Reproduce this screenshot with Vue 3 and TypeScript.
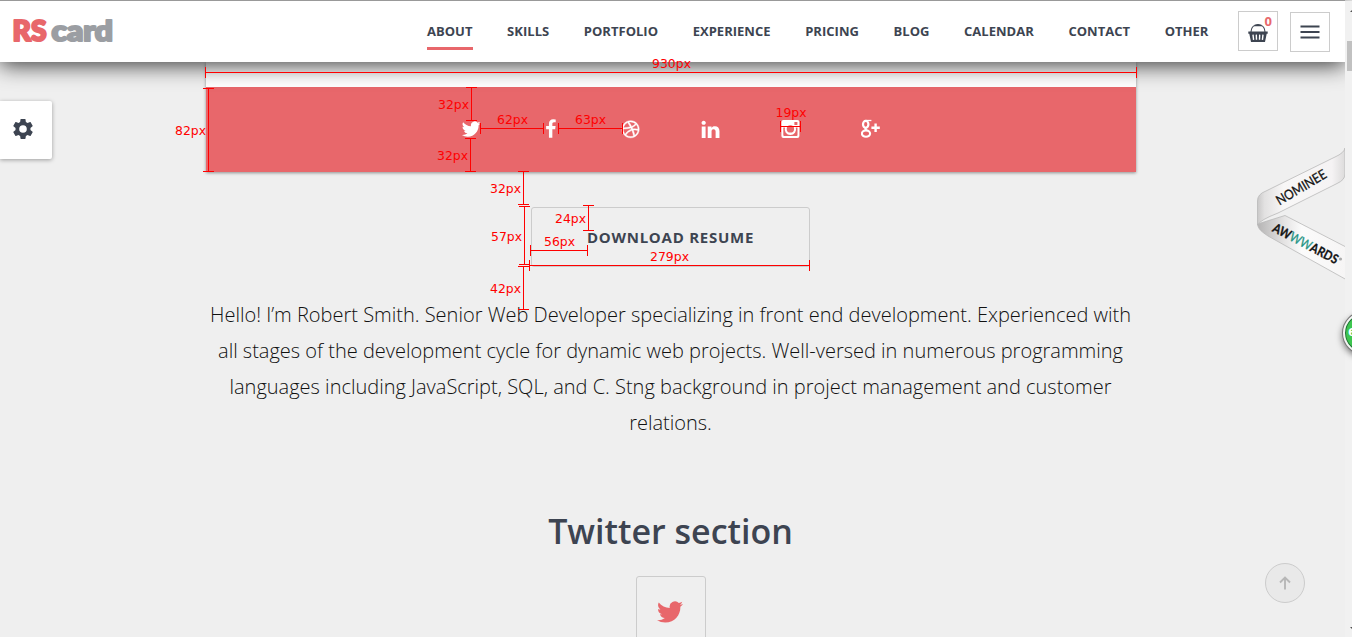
<script setup lang="ts">
interface Mark {
  label: string
  x1: number
  y1: number
  x2: number
  y2: number
  tx: number
  ty: number
  w: number
}

const nav: string[] = ['About', 'Skills', 'Portfolio', 'Experience', 'Pricing', 'Blog', 'Calendar', 'Contact', 'Other']

const marks: Mark[] = [
  { label: '930px', x1: 205, y1: 72, x2: 1136, y2: 72, tx: 652, ty: 68, w: 39 },
  { label: '82px', x1: 208, y1: 88, x2: 208, y2: 171, tx: 175, ty: 135, w: 31 },
  { label: '32px', x1: 471, y1: 87, x2: 471, y2: 120, tx: 438, ty: 109, w: 31 },
  { label: '32px', x1: 470, y1: 138, x2: 470, y2: 171, tx: 437, ty: 160, w: 31 },
  { label: '62px', x1: 480, y1: 128, x2: 543, y2: 128, tx: 497, ty: 124, w: 31 },
  { label: '63px', x1: 558, y1: 128, x2: 622, y2: 128, tx: 575, ty: 124, w: 31 },
  { label: '19px', x1: 780, y1: 126, x2: 800, y2: 126, tx: 775.5, ty: 117, w: 31 },
  { label: '32px', x1: 523, y1: 171, x2: 523, y2: 204, tx: 490, ty: 193, w: 31 },
  { label: '57px', x1: 524, y1: 206, x2: 524, y2: 264, tx: 491, ty: 241, w: 31 },
  { label: '24px', x1: 588, y1: 205, x2: 588, y2: 230, tx: 555, ty: 223, w: 31 },
  { label: '56px', x1: 530, y1: 250, x2: 587, y2: 250, tx: 544, ty: 246, w: 31 },
  { label: '279px', x1: 529, y1: 265, x2: 809, y2: 265, tx: 650, ty: 261, w: 39 },
  { label: '42px', x1: 523, y1: 266, x2: 523, y2: 309, tx: 490, ty: 293, w: 31 },
]

// Dimension line with a 10px tick at each end
function markPath(m: Mark): string {
  const x1 = m.x1 + 0.5
  const y1 = m.y1 + 0.5
  const x2 = m.x2 + 0.5
  const y2 = m.y2 + 0.5
  return m.y1 === m.y2
    ? `M${x1} ${y1}H${x2}M${x1} ${y1 - 5.5}v11M${x2} ${y1 - 5.5}v11`
    : `M${x1} ${y1}V${y2}M${x1 - 5.5} ${y1}h11M${x1 - 5.5} ${y2}h11`
}

const bird =
  'M23.954 4.569a10 10 0 01-2.825.775 4.958 4.958 0 002.163-2.723c-.951.555-2.005.959-3.127 1.184a4.92 4.92 0 00-8.384 4.482C7.691 8.094 4.066 6.13 1.64 3.161a4.822 4.822 0 00-.666 2.475c0 1.71.87 3.213 2.188 4.096a4.904 4.904 0 01-2.228-.616v.061a4.923 4.923 0 003.946 4.827 4.996 4.996 0 01-2.212.085 4.937 4.937 0 004.604 3.417 9.868 9.868 0 01-6.102 2.105c-.39 0-.779-.023-1.17-.067a13.995 13.995 0 007.557 2.209c9.054 0 13.999-7.496 13.999-13.986 0-.209 0-.42-.015-.63a9.936 9.936 0 002.46-2.548z'
</script>

<template>
  <div class="page">
    <header class="header">
      <svg class="logo" width="110" height="44" viewBox="0 0 110 44">
        <text class="logo-rs" x="1.500" y="32" textLength="34" lengthAdjust="spacingAndGlyphs">RS</text>
        <text class="logo-card" x="40.500" y="32" textLength="61.500" lengthAdjust="spacingAndGlyphs">card</text>
      </svg>
      <nav class="nav">
        <a v-for="(item, i) in nav" :key="item" :class="['nav-item', { active: i === 0 }]">{{ item }}</a>
      </nav>
      <button class="square cart" aria-label="Cart">
        <svg width="20" height="18" viewBox="0 0 20 18">
          <path d="M3 8C3.300 4.500 4.500 2 7 1.500M17 8C16.700 4.500 15.500 2 13 1.500" fill="none" stroke="#3d4451" stroke-width="1.100" />
          <path d="M6.500.7Q10-.6 13.500.7v1.600h-7z" fill="#3d4451" />
          <path d="M.3 7.500h19.400v2.300h-1L17 18H3L1.300 9.800h-1z" fill="#3d4451" />
          <path d="M5 10.600l.6 5.200M8.300 10.600l.2 5.200M11.700 10.600l-.2 5.200M15 10.600l-.6 5.200" stroke="#fff" stroke-width="1.400" />
        </svg>
        <span class="count">0</span>
      </button>
      <button class="square burger" aria-label="Menu">
        <svg width="20" height="14" viewBox="0 0 20 14"><path d="M.5 1.500h19M.5 7h19M.5 12.500h19" stroke="#3d4451" stroke-width="2" /></svg>
      </button>
    </header>

    <aside class="settings">
      <svg width="24" height="24" viewBox="0 0 24 24">
        <path
          fill="#3d4451"
          d="M19.430 12.980c.04-.32.07-.64.07-.98s-.03-.66-.07-.98l2.110-1.650c.19-.15.24-.42.12-.64l-2-3.460c-.12-.22-.39-.3-.61-.22l-2.490 1c-.52-.4-1.080-.73-1.690-.98l-.38-2.650C14.460 2.180 14.250 2 14 2h-4c-.25 0-.46.18-.49.42l-.38 2.650c-.61.25-1.170.59-1.690.98l-2.490-1c-.23-.09-.49 0-.61.22l-2 3.460c-.13.22-.07.49.12.64l2.110 1.650c-.04.32-.07.65-.07.98s.03.66.07.98l-2.110 1.650c-.19.15-.24.42-.12.64l2 3.460c.12.22.39.3.61.22l2.490-1c.52.4 1.080.73 1.690.98l.38 2.650c.03.24.24.42.49.42h4c.25 0 .46-.18.49-.42l.38-2.650c.61-.25 1.170-.59 1.690-.98l2.490 1c.23.09.49 0 .61-.22l2-3.460c.12-.22.07-.49-.12-.64l-2.110-1.650zM12 15.800a3.800 3.800 0 1 1 0-7.600 3.800 3.800 0 0 1 0 7.600z"
        />
      </svg>
    </aside>

    <main class="content">
      <section class="card">
        <div class="social">
          <svg width="20" height="20" viewBox="0 0 20 20"><path :d="bird" transform="translate(.8 .7) scale(.78)" /></svg>
          <svg width="20" height="20" viewBox="0 0 20 20">
            <path transform="translate(-.2 .3) scale(.0111)" d="M1343 12v264h-157q-86 0-116 36t-30 108v189h293l-39 296h-254v759h-306v-759h-255v-296h255v-218q0-186 104-288.500t277-102.500q147 0 228 12z" />
          </svg>
          <svg width="20" height="20" viewBox="0 0 20 20">
            <path
              stroke="#fff"
              stroke-width="40"
              transform="translate(-.4 .2) scale(.0112)"
              d="M1152 1500q-42-241-140-498h-2l-2 1q-16 6-43 16.500t-101 49-137 82-131 114.500-103 148l-15-11q184 150 418 150 132 0 256-52zm-185-607q-21-49-53-111-311 93-673 93-1 7-1 21 0 124 44 236.500t124 201.500q50-89 123.500-166.500t142.500-124.500 130.500-81 99.500-48l37-13q4-1 13-3.500t13-4.500zm-107-212q-120-213-244-378-138 65-234 186t-128 272q302 0 606-80zm684 319q-210-60-409-29 87 239 128 469 111-75 185-189.500t96-250.500zm-805-741q-1 0-2 1 1-1 2-1zm590 145q-185-164-433-164-76 0-155 19 131 170 246 382 69-26 130-60.500t96.500-61.500 65.500-57 37.500-40.500zm223 485q-3-232-149-410l-1 1q-9 12-19 24.500t-43.500 44.500-71 60.500-100 65-131.500 64.500q25 53 44 95 2 6 6.500 17.500t7.500 16.500q36-5 74.500-7t73.500-2 69 1.500 64 4 56.500 5.500 48 6.500 36.500 6 25 4.500zm112 7q0 209-103 385.500t-279.500 279.500-385.500 103-385.500-103-279.500-279.500-103-385.500 103-385.500 279.500-279.500 385.500-103 385.500 103 279.500 279.500 103 385.500z"
            />
          </svg>
          <svg width="20" height="20" viewBox="0 0 20 20">
            <path
              transform="translate(-1 .1) scale(.0117)"
              d="M477 625v991h-330v-991h330zm21-306q1 73-50.500 122t-135.500 49h-2q-82 0-132-49t-50-122q0-74 51.500-122.500t134.500-48.500 133 48.500 51 122.500zm1166 729v568h-329v-530q0-105-40.500-164.500t-126.500-59.500q-63 0-105.500 34.500t-63.500 85.500q-11 30-11 81v553h-329q2-399 2-647t-1-296l-1-48h329v144h-2q20-32 41-56t56.500-52 87-43.500 114.500-15.500q171 0 275 113.500t104 332.500z"
            />
          </svg>
          <svg width="20" height="20" viewBox="0 0 20 20">
            <path
              transform="translate(-.6 .3)"
              fill-rule="evenodd"
              d="M3 .6h14q2 0 2 2v14q0 2-2 2H3q-2 0-2-2v-14q0-2 2-2zM14 2.600v3h3v-3zM2.900 8.200v7.600q0 .9.900.9h12.400q.9 0 .9-.9V8.200h-1.700a5.700 5.700 0 1 1-10.800 0zM10 5.900a3.700 3.700 0 1 0 0 7.400 3.700 3.700 0 0 0 0-7.400z"
            />
          </svg>
          <svg width="20" height="20" viewBox="0 0 20 20">
            <g fill="none" stroke="#fff" transform="translate(-.9 .3)">
              <ellipse cx="5.600" cy="5" rx="2.700" ry="3.500" stroke-width="2.200" />
              <path d="M5.500 1.200h5.800" stroke-width="1.300" />
              <path d="M6.200 8.400Q4.300 9.700 6.500 11" stroke-width="2" />
              <ellipse cx="5.900" cy="14.300" rx="4.100" ry="3.200" stroke-width="2.100" />
              <path d="M15.500 4.200v8.400M11.300 8.400h8.400" stroke-width="2.400" />
            </g>
          </svg>
        </div>
      </section>

      <button class="download">Download resume</button>

      <p class="intro">
        <span>Hello! I’m Robert Smith. Senior Web Developer specializing in front end development. Experienced with</span>
        <span>all stages of the development cycle for dynamic web projects. Well-versed in numerous programming</span>
        <span>languages including JavaScript, SQL, and C. Stng background in project management and customer</span>
        <span>relations.</span>
      </p>

      <h2 class="title">Twitter section</h2>
      <div class="tweet">
        <svg width="26" height="26" viewBox="0 0 24 24"><path :d="bird" /></svg>
      </div>
    </main>

    <svg class="ribbon" width="90" height="136" viewBox="1255 146 90 136">
      <defs>
        <linearGradient id="bandTop" x1="0" x2="1">
          <stop offset="0" stop-color="#c9c8c8" />
          <stop offset=".08" stop-color="#e2e1e1" />
          <stop offset=".3" stop-color="#f8f7f7" />
          <stop offset=".85" stop-color="#f5f3f4" />
          <stop offset="1" stop-color="#dcdbdb" />
        </linearGradient>
        <linearGradient id="bandBottom" x1="0" x2="1">
          <stop offset="0" stop-color="#b5b4b4" />
          <stop offset=".3" stop-color="#e4e3e3" />
          <stop offset=".5" stop-color="#fbfbfb" />
          <stop offset="1" stop-color="#f6f5f5" />
        </linearGradient>
      </defs>
      <path d="M1257.500 224C1258 229 1262 232 1268 236L1346 279.500V247L1285 215.500z" fill="url(#bandBottom)" stroke="#b9b9b9" stroke-width=".8" />
      <path d="M1257.500 225V201Q1257.500 194 1266 191L1335 157Q1344 153 1345 148V174Q1345 180 1337 183.500L1278 213Q1260 220 1257.500 225z" fill="url(#bandTop)" stroke="#b9b9b9" stroke-width=".8" />
      <text class="ribbon-text" font-size="13.500" transform="translate(1279.500 205.500) rotate(-30.500)" textLength="56" lengthAdjust="spacingAndGlyphs">NOMINEE</text>
      <text class="ribbon-text bold" font-size="13" transform="translate(1271.500 231) rotate(27.500)" textLength="72" lengthAdjust="spacingAndGlyphs">AW<tspan fill="#1f9484" stroke="#1f9484" font-weight="400">WW</tspan>ARDS</text>
      <circle cx="1340.500" cy="259" r="1.600" fill="#aaa" />
    </svg>

    <button class="to-top" aria-label="Back to top">
      <svg width="14" height="14" viewBox="0 0 14 14"><path d="M7 13.500V2M2 6.500l5-5 5 5" fill="none" stroke="#b7b7b7" stroke-width="1.900" /></svg>
    </button>

    <svg class="marks" width="1352" height="637" viewBox="0 0 1352 637">
      <g v-for="(m, i) in marks" :key="i">
        <path :d="markPath(m)" fill="none" stroke="#f00" shape-rendering="crispEdges" />
        <text :x="m.tx" :y="m.ty" :textLength="m.w" lengthAdjust="spacingAndGlyphs">{{ m.label }}</text>
      </g>
    </svg>

    <div class="scrollbar">
      <svg width="7" height="636" viewBox="0 0 7 636">
        <path d="M5 11l4-4v4zM5 626h4v4z" fill="#505050" />
        <rect x="2" y="40" width="5" height="30" fill="#c1c1c1" />
      </svg>
    </div>
    <div class="bubble"><span>6</span></div>
  </div>
</template>

<style>
html,
body {
  overflow: hidden;
}
</style>

<style scoped>
.page {
  position: relative;
  width: 1352px;
  height: 637px;
  overflow: hidden;
  background: #efefef;
  color: #3d4451;
  font-family: 'Open Sans', 'Noto Sans', sans-serif;
}
.page * {
  box-sizing: border-box;
}
button {
  padding: 0;
  font: inherit;
  color: inherit;
  background: none;
}
.header {
  position: relative;
  z-index: 2;
  display: flex;
  align-items: flex-start;
  width: 1345px;
  height: 62px;
  padding-left: 11px;
  background: #fff;
  border-top: 1px solid #999;
  box-shadow: 0 3px 22px rgba(0, 0, 0, 0.78);
}
.logo {
  flex: none;
  margin-top: 8px;
  font-family: Lato, sans-serif;
  font-weight: 900;
  font-size: 28px;
  stroke-width: 2.2px;
  stroke-linejoin: round;
}
.logo-rs {
  fill: #e8676b;
  stroke: #e8676b;
}
.logo-card {
  fill: #9b9ea3;
  stroke: #9b9ea3;
}
.nav {
  display: flex;
  gap: 34.600px;
  width: 811px;
  margin-left: 306px;
  padding-top: 19px;
}
.nav-item {
  height: 30px;
  font-size: 13px;
  line-height: 23px;
  font-weight: 700;
  letter-spacing: 0.020px;
  text-transform: uppercase;
  white-space: nowrap;
}
.nav-item.active {
  border-bottom: 3px solid #e8676b;
}
.square {
  position: relative;
  display: flex;
  flex: none;
  width: 40px;
  height: 40px;
  border: 1px solid #ccc;
}
.cart {
  margin-top: 10px;
}
.cart svg {
  margin: 12px 0 0 9px;
}
.count {
  position: absolute;
  top: 1px;
  right: 5px;
  font-size: 13px;
  line-height: 17px;
  font-weight: 700;
  color: #e8676b;
}
.burger {
  margin: 11px 0 0 12px;
  padding: 12px 0 0 9px;
}
.settings {
  position: absolute;
  left: 0;
  top: 101px;
  display: flex;
  align-items: center;
  width: 52px;
  height: 58px;
  padding: 0 0 2px 11px;
  background: #fff;
  border-radius: 0 2px 2px 0;
  box-shadow: 0 1px 4px rgba(0, 0, 0, 0.35);
}
.content {
  display: flex;
  flex-direction: column;
  align-items: center;
  width: 929px;
  margin-left: 206px;
}
.card {
  width: 930px;
  height: 110px;
  align-self: flex-start;
  padding-top: 25px;
  background: #fff;
  box-shadow: 0 1px 3px rgba(0, 0, 0, 0.4);
}
.social {
  display: flex;
  gap: 60px;
  height: 85px;
  padding: 32px 0 0 255px;
  background: #e8676b;
}
.social svg {
  fill: #fff;
}
.download {
  width: 279px;
  height: 60px;
  margin-top: 35px;
  padding-bottom: 1px;
  border: 1px solid #ccc;
  border-radius: 3px;
  font-size: 15px;
  font-weight: 700;
  letter-spacing: 0.750px;
  text-transform: uppercase;
}
.intro {
  display: flex;
  flex-direction: column;
  align-items: center;
  margin: 30px 0 0;
  color: #111;
  font-size: 20px;
  line-height: 36px;
  font-weight: 300;
  white-space: nowrap;
}
.title {
  margin: 65px 0 0;
  font-size: 34px;
  line-height: 50px;
  font-weight: 600;
}
.tweet {
  display: flex;
  justify-content: center;
  width: 70px;
  height: 70px;
  margin-top: 20px;
  padding: 22px 1px 0 0;
  border: 1px solid #ccc;
  border-radius: 3px;
}
.tweet svg {
  fill: #e8676b;
}
.ribbon {
  position: absolute;
  left: 1255px;
  top: 146px;
}
.ribbon-text {
  font-family: Lato, sans-serif;
  fill: #151515;
  stroke: #151515;
  stroke-width: 0.3px;
}
.ribbon-text.bold {
  font-weight: 700;
}
.to-top {
  position: absolute;
  left: 1265px;
  top: 563px;
  display: flex;
  align-items: center;
  justify-content: center;
  width: 40px;
  height: 40px;
  background: #e9e9e9;
  border: 1px solid #ccc;
  border-radius: 50%;
}
.marks {
  position: absolute;
  left: 0;
  top: 0;
  z-index: 3;
  fill: #f00;
  font-family: 'DejaVu Sans', sans-serif;
  font-size: 12.500px;
}
.scrollbar {
  position: absolute;
  right: 0;
  top: 1px;
  z-index: 4;
  width: 7px;
  height: 636px;
  background: #f1f1f1;
}
.bubble {
  position: absolute;
  left: 1343px;
  top: 312px;
  z-index: 5;
  width: 42px;
  height: 42px;
  border: 2px solid #f4f4f4;
  border-radius: 50%;
  background: #3ec64f;
  box-shadow: inset 0 0 0 1px #246b3a, 0 0 0 1px #777, -1px 3px 6px rgba(0, 0, 0, 0.5);
  color: #fff;
  font: 700 11px/38px 'DejaVu Sans', sans-serif;
}
.bubble span {
  padding-left: 3px;
}
</style>
